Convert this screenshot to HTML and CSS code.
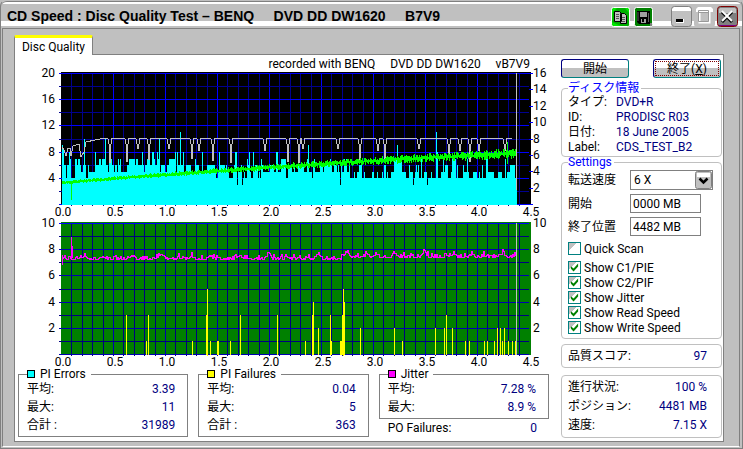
FILE: index.html
```html
<!DOCTYPE html>
<html lang="ja">
<head>
<meta charset="utf-8">
<title>CD Speed : Disc Quality Test</title>
<link rel="stylesheet" href="styles.css">
</head>
<body>
<div class="window">
  <header class="titlebar">
    <h1 class="title">CD Speed : Disc Quality Test – BENQ &nbsp; &nbsp; DVD DD DW1620 &nbsp; &nbsp; B7V9</h1>
    <div class="tools">
      <button class="tool" aria-label="Copy">
        <svg width="19" height="20" viewBox="0 0 19 20"><rect x=".5" y=".5" width="18" height="19" rx="2" fill="#00e800" stroke="#fff"/><path d="M1 15L10 19H18V6L14 1H6L2 5Z" fill="#008000" opacity=".55"/><path d="M3.500 4.500h5l2 2v8h-7zM9.500 6.500h4l2 2v8h-6z" fill="#c0c0c0" stroke="#000"/><path d="M5 7.500h3M5 9.500h3M5 11.500h3M11 10.500h3M11 12.500h3M11 14.500h3" stroke="#555"/></svg>
      </button>
      <button class="tool" aria-label="Save">
        <svg width="19" height="20" viewBox="0 0 19 20"><rect x=".5" y=".5" width="18" height="19" rx="2" fill="#008000" stroke="#fff"/><path d="M3 4h13v13H5l-2-2z" fill="#000"/><path d="M6 5h7v5H6zM7 12h5v4H7z" fill="#a0a0a0"/><path d="M8 12h2v3H8z" fill="#000"/><path d="M4 5v9M14.500 6v9" stroke="#606060"/><path d="M16 16h2v3h-2z" fill="#808080"/></svg>
      </button>
    </div>
    <div class="controls">
      <button class="tool" aria-label="Minimize">
        <svg width="21" height="21" viewBox="0 0 21 21"><rect x=".5" y=".5" width="20" height="20" rx="3" fill="#c0c0c0" stroke="#808080"/><path d="M1 5V3l2-2h15l2 2v2z" fill="#fff"/><path d="M5 13h8v4H5z" fill="#fff"/><path d="M5 13h7v3H5z" fill="#000"/></svg>
      </button>
      <button class="tool" aria-label="Maximize">
        <svg width="21" height="21" viewBox="0 0 21 21"><rect width="21" height="21" rx="3" fill="#c0c0c0"/><path d="M2 6V3l2-2h13l2 2v3z" fill="#fff"/><path d="M5.500 5.500h10v11h-10z" fill="none" stroke="#fff" stroke-width="2"/><path d="M4.500 4.500h10v11h-10zM4 6.500h11" fill="none" stroke="#999"/></svg>
      </button>
      <button class="tool" aria-label="Close">
        <svg width="21" height="21" viewBox="0 0 21 21"><rect x=".5" y=".5" width="20" height="20" rx="3" fill="#808080" stroke="#800000"/><path d="M2 7V3l1-1h15l1 1v4z" fill="#c0c0c0"/><path d="M2 19.500h17" stroke="#800080"/><path d="M5 6l10 10M15 6L5 16" stroke="#000" stroke-width="3"/><path d="M5 5l10 10M15 5L5 15" stroke="#fff" stroke-width="2"/></svg>
      </button>
    </div>
  </header>
  <main class="frame">
    <nav class="tabs"><button class="tab">Disc Quality</button></nav>
    <div class="panel">
      <section class="results">
        <p class="caption">recorded with BENQ &nbsp; &nbsp; DVD DD DW1620 &nbsp; &nbsp; vB7V9</p>
        <svg id="charts" class="charts" viewBox="18 71 538 297" role="img" aria-label="Disc quality charts"></svg>
        <div class="stats">
          <fieldset class="stat">
            <legend><i class="swatch cyan"></i>PI Errors</legend>
            <dl><dt>平均:</dt><dd>3.39</dd><dt>最大:</dt><dd>11</dd><dt>合計 :</dt><dd>31989</dd></dl>
          </fieldset>
          <fieldset class="stat">
            <legend><i class="swatch yellow"></i>PI Failures</legend>
            <dl><dt>平均:</dt><dd>0.04</dd><dt>最大:</dt><dd>5</dd><dt>合計 :</dt><dd>363</dd></dl>
          </fieldset>
          <div>
            <fieldset class="stat">
              <legend><i class="swatch magenta"></i>Jitter</legend>
              <dl><dt>平均:</dt><dd>7.28 %</dd><dt>最大:</dt><dd>8.9 %</dd></dl>
            </fieldset>
            <dl class="po"><dt>PO Failures:</dt><dd>0</dd></dl>
          </div>
        </div>
      </section>
      <aside class="side">
        <div class="actions">
          <button class="push">開始</button>
          <button class="push focus">終了(<u>X</u>)</button>
        </div>
        <fieldset class="group disc">
          <legend>ディスク情報</legend>
          <dl><dt>タイプ:</dt><dd>DVD+R</dd><dt>ID:</dt><dd>PRODISC R03</dd><dt>日付:</dt><dd>18 June 2005</dd><dt>Label:</dt><dd>CDS_TEST_B2</dd></dl>
        </fieldset>
        <fieldset class="group settings">
          <legend>Settings</legend>
          <div class="fields">
            <label for="speed">転送速度</label>
            <span class="combo">
              <select id="speed"><option>6 X</option></select>
              <svg class="arrow" width="17" height="18" viewBox="0 0 17 18"><rect x=".5" y=".5" width="16" height="17" rx="2" fill="#c0c0c0" stroke="#808080"/><path d="M2 6V2h13v4z" fill="#fff"/><path d="M4.500 7.500l4 4 4-4" fill="none" stroke="#000" stroke-width="2.500"/></svg>
            </span>
            <label for="start">開始</label>
            <input id="start" class="text" value="0000 MB">
            <label for="end">終了位置</label>
            <input id="end" class="text" value="4482 MB">
          </div>
          <div class="checks">
            <label class="quick"><input type="checkbox">Quick Scan</label>
            <label><input type="checkbox" checked>Show C1/PIE</label>
            <label><input type="checkbox" checked>Show C2/PIF</label>
            <label><input type="checkbox" checked>Show Jitter</label>
            <label><input type="checkbox" checked>Show Read Speed</label>
            <label><input type="checkbox" checked>Show Write Speed</label>
          </div>
        </fieldset>
        <dl class="group score"><dt>品質スコア:</dt><dd>97</dd></dl>
        <dl class="group progress"><dt>進行状況:</dt><dd>100 %</dd><dt>ポジション:</dt><dd>4481 MB</dd><dt>速度:</dt><dd>7.15 X</dd></dl>
      </aside>
    </div>
  </main>
</div>
<script src="charts.js"></script>
</body>
</html>
```
FILE: styles.css
```css
* { box-sizing: border-box; }

body {
  margin: 0;
  background: #c0c0c0;
  color: #000;
  font: 12px/18px Roboto, "Noto Sans CJK JP", sans-serif;
}

h1, p, dl, dt, dd, fieldset, legend { margin: 0; padding: 0; }
button, input, select { font: inherit; color: inherit; }
i { font-style: normal; }

.window {
  display: flex;
  flex-direction: column;
  min-height: 100vh;
  padding: 0 2px 1px;
  border: 1px solid #808080;
  border-top-color: #c0c0c0;
  border-radius: 6px 6px 0 0;
}

.titlebar {
  display: flex;
  align-items: center;
  height: 27px;
  margin: 0 -2px;
  padding: 3px 4px 0 6px;
  border-top: 1px solid #808080;
  border-radius: 6px 6px 0 0;
  background: linear-gradient(#fff 0 2px, #c0c0c0 2px 19px, #fff 19px 24px, #c0c0c0 24px);
}

.title {
  flex: 1;
  font-family: "Liberation Sans", sans-serif;
  font-size: 14px;
  line-height: 20px;
  padding-bottom: 2px;
  white-space: nowrap;
}

.tools, .controls { display: flex; gap: 4px; }
.controls { gap: 2px; margin-left: 18px; }

.tool {
  display: block;
  padding: 0;
  border: 0;
  background: none;
}
.tool svg { display: block; }

.frame {
  flex: 1;
  display: flex;
  flex-direction: column;
  padding: 6px 15px 4px 11px;
  border: 1px solid #808080;
  border-bottom: 1px solid #fff;
  margin-left: -1px;
}

.tabs { display: flex; }

.tab {
  width: 79px;
  height: 20px;
  margin-bottom: -1px;
  padding: 0;
  border: solid #808080;
  border-width: 0 1px;
  border-top: 3px solid #ff0;
  border-radius: 2px 2px 0 0;
  background: #fff;
  line-height: 16px;
  position: relative;
}

.panel {
  flex: 1;
  display: grid;
  grid-template-columns: 1fr 161px;
  gap: 5px;
  padding: 0 1px 0 3px;
  border: 1px solid #808080;
  background: #fff;
}

.caption {
  height: 16px;
  padding-right: 26px;
  text-align: right;
}

.charts { display: block; width: 100%; overflow: visible; }
.charts text { font-size: 12px; }
.charts .end { text-anchor: end; }
.charts .mid { text-anchor: middle; }

.stats {
  display: grid;
  grid-template-columns: repeat(3, 1fr);
  gap: 10px;
  padding-right: 7px;
}

.stat {
  min-width: 0;
  padding: 0 12px 2px 8px;
  border: 1px solid #808080;
}
.stat legend {
  display: flex;
  align-items: center;
  gap: 5px;
  line-height: 12px;
  padding-right: 5px;
}

.swatch {
  width: 8px;
  height: 8px;
  border: 1px solid #000;
}
.cyan { background: #0ff; }
.yellow { background: #ff0; }
.magenta { background: #f0f; }

dl {
  display: grid;
  grid-template-columns: auto 1fr;
  white-space: nowrap;
}
dd { color: #000080; text-align: right; }
.po { padding: 0 12px 0 9px; }

.side { padding-top: 4px; }

.actions {
  display: flex;
  justify-content: space-between;
  padding-right: 1px;
}

.push {
  width: 68px;
  height: 19px;
  padding: 0;
  border: 1px solid #000080;
  border-color: #000080 #008080 #008080 #000080;
  border-radius: 3px;
  background: linear-gradient(#fff 50%, #c0c0c0 50%);
  line-height: 16px;
}
.push.focus { outline: 1px dotted #800000; outline-offset: -3px; }

.group {
  border: 1px solid #c0c0c0;
  border-radius: 4px;
  padding: 0 14px 0 6px;
  min-width: 0;
}
.group legend {
  color: #00f;
  line-height: 14px;
  padding: 0 2px 0 0;
}

.disc { margin-top: 3px; }
.disc dl {
  grid-template-columns: 48px 1fr;
  line-height: 15px;
  padding-bottom: 1px;
}
.disc dd { text-align: left; }

.settings { margin-top: -2px; padding-bottom: 3px; }

.fields {
  display: grid;
  grid-template-columns: 62px 1fr;
  row-gap: 4px;
  align-items: center;
  padding-top: 1px;
}

.combo { position: relative; width: 83px; }
.combo select {
  display: block;
  appearance: none;
  width: 100%;
  height: 20px;
  padding: 0 3px;
  border: 1px solid #808080;
  border-radius: 0;
  background: #fff;
}
.arrow {
  position: absolute;
  top: 1px;
  right: 1px;
  pointer-events: none;
}

.text {
  width: 71px;
  height: 19px;
  padding: 0 2px;
  border: 1px solid #808080;
  background: #fff;
}

.checks {
  display: flex;
  flex-direction: column;
  padding-top: 5px;
}
.checks label {
  display: flex;
  align-items: center;
  gap: 3px;
  height: 15px;
}
.checks .quick { margin-bottom: 4px; }
.checks input {
  appearance: none;
  width: 13px;
  height: 13px;
  margin: 0;
  border: 1px solid #008080;
  background: linear-gradient(135deg, #c0c0c0 35%, #fff 35%);
}
.checks input:checked::after {
  content: "";
  display: block;
  width: 9px;
  height: 9px;
  margin: 1px;
  background: #008000;
  clip-path: polygon(10% 35%, 40% 60%, 90% 5%, 90% 40%, 40% 95%, 10% 65%);
}

.score { margin-top: 5px; padding-top: 2px; padding-bottom: 2px; }
.progress { margin-top: 7px; padding-top: 2px; padding-bottom: 2px; line-height: 19px; }
```
FILE: charts.js
```js
const svg = document.getElementById('charts');

function add(name, attrs, text) {
  const node = document.createElementNS('http://www.w3.org/2000/svg', name);
  for (const key in attrs) node.setAttribute(key, attrs[key]);
  if (text !== undefined) node.textContent = text;
  svg.appendChild(node);
}
const rect = (x, y, w, h, fill) =>
  add('rect', { x, y, width: w, height: h, fill, 'shape-rendering': 'crispEdges' });
const line = (d, stroke) =>
  add('path', { d, stroke, fill: 'none', 'shape-rendering': 'crispEdges' });

let seed = 1620;
function rnd() {
  seed = (seed * 1103515245 + 12345) % 2147483648;
  return seed / 2147483648;
}

function grid(top, color, minor, major) {
  rect(61, top - 1, 470, 133, color);
  for (let i = 1; i <= 44; i++) {
    rect(61 + Math.round(i * 10.4), top, 1, 133, i % 5 ? minor : major);
  }
  for (let i = 0; i <= 10; i++) {
    const y = top + Math.round(i * 13.1);
    rect(59, y, 470, 1, i === 0 ? '#0000ff' : i % 2 ? minor : major);
  }
}

function labels(top, left, leftStep, right, rightStep) {
  left.forEach((t, i) => add('text', { x: 55, y: top + 4 + i * leftStep, class: 'end' }, t));
  right.forEach((t, i) => add('text', { x: 533, y: top + 4 + i * rightStep }, t));
  for (let i = 0; i < 10; i++) {
    add('text', { x: 63 + i * 52, y: top + 143, class: 'mid' }, (i / 2).toFixed(1));
  }
}

// PI errors with the read and write speed curves
grid(73, '#000000', '#000090', '#0000ff');
for (let i = 0; i <= 8; i++) rect(529, 73 + Math.round(i * 16.4), 4, 1, '#0000ff');

const peaks = { 84: 10, 62: 9, 63: 8.5, 105: 10, 159: 10, 180: 11, 202: 8, 308: 9, 397: 9, 436: 11, 437: 8 };
let bars = '';
let v = 6;
for (let x = 62; x < 517; x++) {
  const r = rnd();
  if (rnd() > 0.35 || v < 4 || v > 7) {
    if (x < 210) v = r < 0.03 ? 4 : r < 0.3 ? 5 : r < 0.68 ? 6 : r < 0.86 ? 7 : 8;
    else if (x < 350) v = r < 0.03 ? 3 : r < 0.12 ? 4 : r < 0.5 ? 5 : r < 0.82 ? 6 : r < 0.93 ? 7 : 8;
    else v = r < 0.03 ? 3 : r < 0.4 ? 4 : r < 0.74 ? 5 : r < 0.94 ? 6 : 7;
  }
  bars += `M${x}.5 205V${Math.round(204.5 - (peaks[x] || v) * 6.56)}`;
}
line(bars, '#00ffff');

const dips = [[110, 163], [127, 162], [138, 149], [149, 160], [169, 149], [192, 159], [199, 151],
  [213, 161], [231, 163], [265, 151], [288, 162], [299, 163], [303, 149], [338, 149], [360, 163],
  [378, 151], [385, 162], [419, 149], [449, 155], [460, 151], [470, 162], [479, 151], [505, 151]];
let write = 'M62 147L64 150L66 156L68 148H70L71 156L73 146L79 144L81 157L84 152L86 142L95 140L102 138.5';
for (const [x, y] of dips) write += `H${x - 2}L${x - 1} 144L${x} ${y}L${x + 1} 144L${x + 2} 138.5`;
line(write + 'H512', '#c0c0c0');

let speed = '';
for (let x = 62; x < 516; x++) {
  const t = (x - 62) / 454;
  const mid = 182.5 - 37 * t + 7.5 * t * t;
  const amp = 1 + 3.6 * t;
  speed += `M${x}.5 ${Math.round(mid - rnd() * amp - 0.5)}V${Math.round(mid + rnd() * amp + 1)}`;
}
line(speed + 'M71.5 182V200M507.5 142V164', '#00ff00');
rect(516, 73, 1, 117, '#c0c0c0');
labels(73, [20, 16, 12, 8, 4], 26.2, [16, 14, 12, 10, 8, 6, 4, 2], 16.4);

// PI failures with jitter
grid(223, '#008000', '#000080', '#0000b0');
const fails = [[126, 3], [146, 1], [148, 3], [192, 1], [206, 3], [207, 5], [210, 1], [217, 1], [218, 1],
  [230, 1], [240, 3], [277, 3], [305, 1], [312, 3], [313, 4], [318, 2], [330, 3], [331, 1], [340, 1],
  [341, 1], [342, 3], [343, 5], [344, 4], [360, 2], [394, 2], [402, 1], [435, 2], [444, 2], [446, 3],
  [452, 2], [465, 1], [469, 1], [484, 1], [487, 1], [494, 1], [497, 2], [500, 2], [502, 1], [504, 2],
  [508, 1], [512, 1], [515, 1]];
for (const [x, n] of fails) rect(x, Math.round(354 - n * 13.1), 1, Math.round(n * 13.1) + 1, '#ffff00');

let jitter = 'M62.5 265V255';
let last = 258;
for (let x = 63; x < 516; x++) {
  const wave = Math.max(0, Math.sin(x / 3.1) * Math.sin(x / 11.7)) * 4;
  const y = Math.round(259.5 - (x > 340 ? 2 : 0) - wave - rnd() * rnd() * 6);
  jitter += `M${x}.5 ${Math.min(y, last)}V${Math.max(y, last) + 1}`;
  last = y;
}
line(jitter + 'M71.5 237V258M72.5 246V258', '#ff00ff');
rect(516, 223, 1, 132, '#c0c0c0');
labels(223, [10, 8, 6, 4, 2], 26.2, [10, 8, 6, 4, 2], 26.2);
```
